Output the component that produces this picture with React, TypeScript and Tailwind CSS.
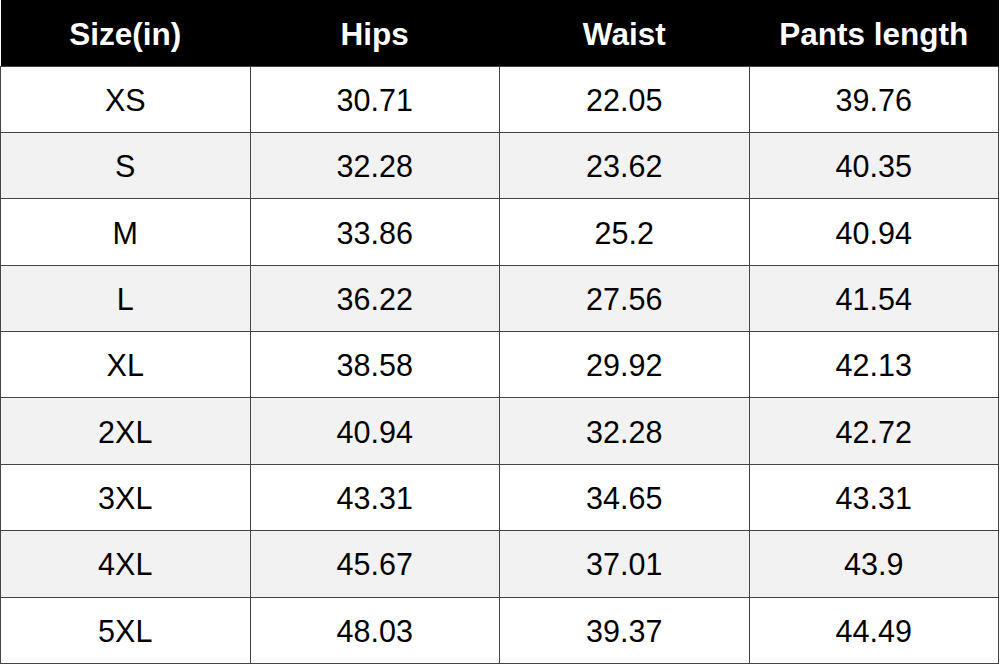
const rows = [
  ["XS", "30.71", "22.05", "39.76"],
  ["S", "32.28", "23.62", "40.35"],
  ["M", "33.86", "25.2", "40.94"],
  ["L", "36.22", "27.56", "41.54"],
  ["XL", "38.58", "29.92", "42.13"],
  ["2XL", "40.94", "32.28", "42.72"],
  ["3XL", "43.31", "34.65", "43.31"],
  ["4XL", "45.67", "37.01", "43.9"],
  ["5XL", "48.03", "39.37", "44.49"],
];

const headers = ["Size(in)", "Hips", "Waist", "Pants length"];

export default function App() {
  return (
    <div className="w-[1000px] h-[664px] bg-white font-['Liberation_Sans',Arial,sans-serif]">
      <table className="w-[999px] h-[664px] border-collapse table-fixed">
        <thead>
          <tr className="bg-black text-white">
            {headers.map((h) => (
              <th key={h} className="h-[66px] pt-[3px] text-[31.5px] font-bold text-center align-middle">
                {h}
              </th>
            ))}
          </tr>
        </thead>
        <tbody>
          {rows.map((r, i) => (
            <tr key={r[0]} className={i % 2 === 1 ? "bg-[#f2f2f2]" : "bg-white"}>
              {r.map((c, j) => (
                <td
                  key={j}
                  className="h-[66px] pt-[3px] border border-[#444] text-[30.5px] text-black text-center align-middle"
                >
                  {c}
                </td>
              ))}
            </tr>
          ))}
        </tbody>
      </table>
    </div>
  );
}
